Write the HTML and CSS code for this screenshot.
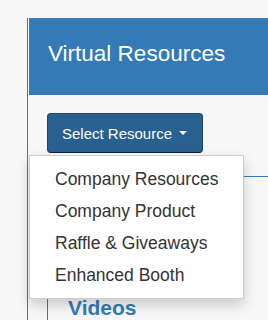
FILE: index.html
```html
<!DOCTYPE html>
<html lang="en">
<head>
  <meta charset="utf-8">
  <title>Virtual Resources</title>
  <link rel="stylesheet" href="styles.css">
</head>
<body>
  <div id="page">
    <div class="content">
      <div class="banner">
        <h1>Virtual Resources</h1>
      </div>

      <div class="area">
        <!-- Resource picker -->
        <div class="dropdown">
          <button class="btn-select">Select Resource <span class="caret"></span></button>
          <ul class="menu">
            <li>Company Resources</li>
            <li>Company Product</li>
            <li>Raffle &amp; Giveaways</li>
            <li>Enhanced Booth</li>
          </ul>
        </div>

        <div class="panel">
          <h3>Videos</h3>
        </div>
      </div>
    </div>
  </div>
</body>
</html>
```

FILE: styles.css
```css
body {
  margin: 0;
  font-family: "Liberation Sans", Arial, sans-serif;
  background-color: #f7f7f7;
  color: #333;
  overflow: hidden;
}
#page {
  padding: 18px 0 0 27px;
  height: 320px;
  box-sizing: border-box;
  overflow: hidden;
}
.content {
  border-left: 1px solid #337ab7;
  height: 100%;
}
.banner {
  background: #337ab7;
  border-left: 1px solid #fff;
  height: 77px;
  box-sizing: border-box;
  padding: 25px 0 0 19px;
}
.banner h1 {
  margin: 0;
  font-size: 22.5px;
  line-height: 22px;
  font-weight: normal;
  color: #fff;
}
.area {
  padding-left: 19px;
}
.dropdown {
  position: relative;
  display: flex;
  margin-top: 18px;
}
.btn-select {
  display: flex;
  align-items: center;
  height: 40px;
  padding: 0 15px 0 14px;
  font-family: inherit;
  font-size: 15px;
  color: #fff;
  background: #286090;
  border: 1px solid #1d4465;
  border-bottom-color: #0f2234;
  border-radius: 4px;
  cursor: pointer;
}
.caret {
  width: 0;
  height: 0;
  margin-left: 7px;
  border-top: 4px solid #fff;
  border-left: 4px solid transparent;
  border-right: 4px solid transparent;
}
.menu {
  position: absolute;
  top: calc(100% + 2px);
  left: -18px;
  z-index: 2;
  width: 213px;
  margin: 0;
  padding: 7px 0;
  list-style: none;
  background: #fff;
  border: 1px solid #ccc;
  box-shadow: 0 6px 12px rgba(0, 0, 0, 0.175);
}
.menu li {
  padding-left: 25px;
  font-size: 17.5px;
  line-height: 32px;
  white-space: nowrap;
}
.panel {
  margin-top: 23px;
  border-top: 1px solid #337ab7;
  border-left: 1px solid #337ab7;
  height: 143px;
  padding-left: 20px;
}
.panel h3 {
  margin: 0;
  padding-top: 120px;
  font-size: 21px;
  line-height: 21px;
  font-weight: bold;
  color: #337ab7;
}
```
